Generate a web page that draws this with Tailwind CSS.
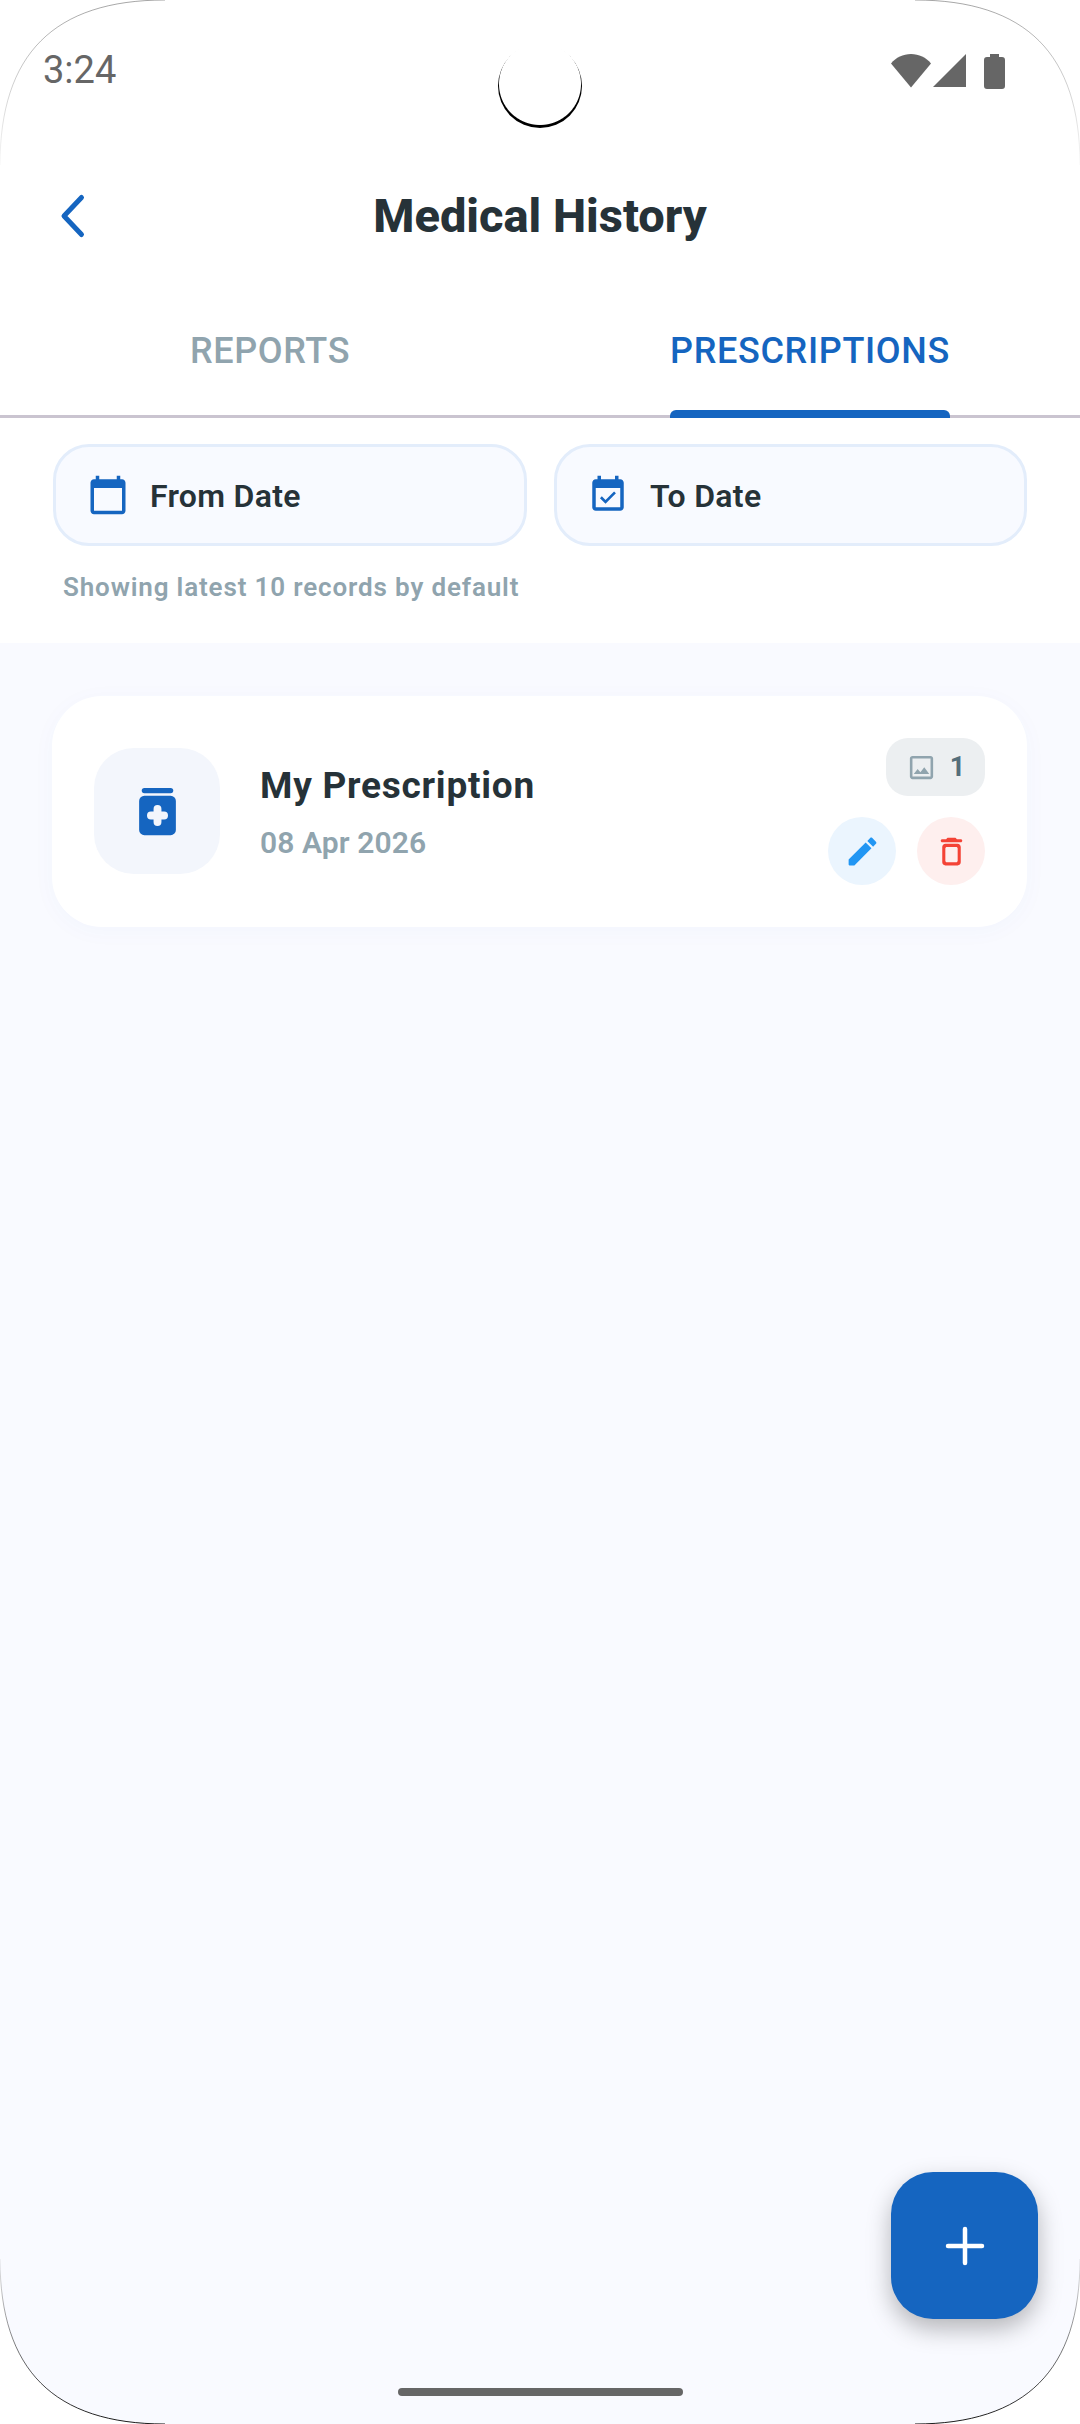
<!DOCTYPE html>
<html lang="en">
<head>
    <meta charset="UTF-8">
    <meta name="viewport" content="width=device-width, initial-scale=1.0">
    <title>Medical History</title>
    <script src="https://cdn.jsdelivr.net/npm/@tailwindcss/browser@4"></script>
</head>
<body class="bg-white font-['Roboto',sans-serif]">
    <div class="relative w-[1080px] h-[2424px] overflow-hidden bg-[#f9faff] flex flex-col">
        <!-- status bar -->
        <div class="h-[150px] bg-white flex justify-between items-start pl-[43px] pr-[75px] pt-[48px]">
            <span class="text-[38px] leading-[44px] text-[#666666]">3:24</span>
            <div class="flex items-start gap-[3px] pt-[6px]">
                <svg width="40" height="34" viewBox="0 0 40 34"><path d="M0 9.500C5 3.500 12 0 20 0s15 3.500 20 9.500L20 33.500z" fill="#666666"/></svg>
                <svg width="34" height="34" viewBox="0 0 34 34" class="ml-[-1px]"><path d="M33 0v33H0z" fill="#666666"/></svg>
                <svg width="21" height="35" viewBox="0 0 21 35" class="ml-[14px]"><path d="M6 3V0h9v3h3a3 3 0 0 1 3 3v26a3 3 0 0 1-3 3H3a3 3 0 0 1-3-3V6a3 3 0 0 1 3-3z" fill="#666666"/></svg>
            </div>
        </div>
        <!-- camera cutout -->
        <div class="absolute left-[498px] top-[44px] w-[84px] h-[84px] rounded-full bg-[radial-gradient(circle_at_50%_47.6%,#ffffff_40.5px,#000000_41.5px)]"></div>

        <!-- header -->
        <div class="relative h-[132px] bg-white flex items-center justify-center">
            <svg class="absolute left-[58px] top-[42px]" width="30" height="48" viewBox="0 0 30 48" fill="none"><path d="M23.500 5.500L6 24l17.500 18.500" stroke="#1565c0" stroke-width="5" stroke-linecap="round" stroke-linejoin="round"/></svg>
            <h1 class="text-[47px] font-extrabold text-[#263238]">Medical History</h1>
        </div>

        <!-- tabs -->
        <div class="relative h-[136px] bg-white flex border-b-[3px] border-[#cac4d0]">
            <div class="w-1/2 flex justify-center pt-[48px] text-[36px] leading-[42px] font-medium tracking-[0.65px] text-[#90a4ae]">REPORTS</div>
            <div class="w-1/2 flex justify-center pt-[48px]">
                <div class="relative h-[132px] text-[36px] leading-[42px] font-medium tracking-[0.65px] text-[#1565c0]">
                    PRESCRIPTIONS
                    <div class="absolute left-0 right-0 top-[80px] h-[8px] bg-[#1565c0] rounded-t-[6px]"></div>
                </div>
            </div>
        </div>

        <!-- date filters -->
        <div class="h-[225px] bg-white px-[53px] pt-[26px]">
            <div class="flex gap-[27px]">
                <div class="w-[474px] h-[102px] rounded-[36px] border-[3px] border-[#e3edfb] bg-[#f8faff] flex items-center pl-[31px] gap-[21px]">
                    <svg width="42" height="42" viewBox="0 0 24 24" fill="#1565c0"><path d="M20 3h-1V1h-2v2H7V1H5v2H4c-1.100 0-2 .9-2 2v16c0 1.100.9 2 2 2h16c1.100 0 2-.9 2-2V5c0-1.100-.9-2-2-2zm0 18H4V8h16v13z"/></svg>
                    <span class="pt-[2px] text-[32px] font-semibold tracking-[0.3px] text-[#263238]">From Date</span>
                </div>
                <div class="w-[473px] h-[102px] rounded-[36px] border-[3px] border-[#e3edfb] bg-[#f8faff] flex items-center pl-[30px] gap-[21px]">
                    <svg width="42" height="42" viewBox="0 0 24 24" fill="#1565c0"><path d="M16.530 11.060L15.470 10l-4.880 4.880-2.120-2.120-1.060 1.060L10.590 17l5.940-5.940zM19 3h-1V1h-2v2H8V1H6v2H5c-1.110 0-1.990.9-1.990 2L3 19c0 1.100.89 2 2 2h14c1.100 0 2-.9 2-2V5c0-1.100-.9-2-2-2zm0 16H5V8h14v11z"/></svg>
                    <span class="pt-[2px] text-[32px] font-semibold tracking-[0.3px] text-[#263238]">To Date</span>
                </div>
            </div>
            <p class="mt-[26px] ml-[10px] text-[26px] leading-[30px] font-semibold text-[#90a4ae] tracking-[0.85px]">Showing latest 10 records by default</p>
        </div>

        <!-- list -->
        <div class="flex-1 px-[52px] pt-[53px]">
            <div class="relative w-[975px] h-[231px] rounded-[50px] bg-white shadow-[0_4px_24px_rgba(21,101,192,0.03)] flex items-center pl-[42px]">
                <div class="mb-[1px] w-[126px] h-[126px] rounded-[40px] bg-[#f3f6fc] flex items-center justify-center">
                    <svg width="63" height="63" viewBox="0 0 24 24" fill="#1565c0">
                        <rect x="6" y="3" width="12" height="2" rx="1"/>
                        <path d="M7 6h10a2 2 0 0 1 2 2v11a2 2 0 0 1-2 2H7a2 2 0 0 1-2-2V8a2 2 0 0 1 2-2z"/>
                        <path d="M9.500 13.500h5M12 11v5" stroke="#f3f6fc" stroke-width="3" stroke-linecap="round"/>
                    </svg>
                </div>
                <div class="ml-[40px] mt-[2px] flex flex-col">
                    <span class="text-[37px] leading-[44px] font-bold text-[#263238] tracking-[0.75px]">My Prescription</span>
                    <span class="mt-[17px] text-[30px] leading-[36px] font-semibold text-[#90a4ae] tracking-[0.1px]">08 Apr 2026</span>
                </div>
                <div class="ml-auto mr-[42px] flex flex-col items-end">
                    <div class="w-[99px] h-[58px] rounded-[22px] bg-[#eceff1] flex items-center justify-center gap-[13px]">
                        <svg width="31" height="31" viewBox="0 0 24 24" fill="#90a4ae"><path d="M19 5v14H5V5h14m0-2H5c-1.100 0-2 .9-2 2v14c0 1.100.9 2 2 2h14c1.100 0 2-.9 2-2V5c0-1.100-.9-2-2-2zm-4.860 8.860l-3 3.870L9 13.140 6 17h12l-3.860-5.140z"/></svg>
                        <span class="text-[27px] font-bold text-[#546e7a]">1</span>
                    </div>
                    <div class="mt-[21px] flex gap-[21px]">
                        <div class="w-[68px] h-[68px] rounded-full bg-[#ebf5fe] flex items-center justify-center">
                            <svg width="37" height="37" viewBox="0 0 24 24" fill="#2196f3"><path d="M3 17.460v3.040c0 .28.22.5.5.5h3.040c.13 0 .26-.05.35-.15L17.810 9.940l-3.750-3.750L3.150 17.100c-.1.1-.15.22-.15.36zM20.710 7.040c.39-.39.39-1.020 0-1.410l-2.340-2.340c-.39-.39-1.020-.39-1.410 0l-1.830 1.830 3.750 3.750 1.830-1.830z"/></svg>
                        </div>
                        <div class="w-[68px] h-[68px] rounded-full bg-[#feefee] flex items-center justify-center">
                            <svg width="37" height="37" viewBox="0 0 24 24" fill="#f44336"><path d="M6 19c0 1.100.9 2 2 2h8c1.100 0 2-.9 2-2V9c0-1.100-.9-2-2-2H8c-1.100 0-2 .9-2 2v10zM9 9h6c.55 0 1 .45 1 1v8c0 .55-.45 1-1 1H9c-.55 0-1-.45-1-1v-8c0-.55.45-1 1-1zm6.500-5l-.71-.71c-.18-.18-.44-.29-.7-.29H9.910c-.26 0-.52.11-.7.29L8.500 4H6c-.55 0-1 .45-1 1s.45 1 1 1h12c.55 0 1-.45 1-1s-.45-1-1-1h-2.500z"/></svg>
                        </div>
                    </div>
                </div>
            </div>
        </div>

        <!-- floating add button -->
        <div class="absolute left-[891px] top-[2172px] w-[147px] h-[147px] rounded-[42px] bg-[#1565c0] shadow-[0_10px_24px_rgba(0,0,0,0.28)] flex items-center justify-center">
            <svg width="40" height="40" viewBox="0 0 40 40" fill="none"><path d="M20 3v34M3 20h34" stroke="#ffffff" stroke-width="4.500" stroke-linecap="round"/></svg>
        </div>

        <!-- home indicator -->
        <div class="absolute left-[398px] top-[2388px] w-[285px] h-[8px] rounded-full bg-[#666666]"></div>

        <!-- screen corners -->
        <svg class="absolute inset-0 pointer-events-none" width="1080" height="2424" viewBox="0 0 1080 2424" fill="#ffffff">
            <defs>
                <linearGradient id="edgeTop" gradientUnits="userSpaceOnUse" x1="0" y1="0" x2="0" y2="165">
                    <stop offset="0" stop-color="#000000" stop-opacity="0.35"/>
                    <stop offset="1" stop-color="#000000" stop-opacity="0.03"/>
                </linearGradient>
                <linearGradient id="edgeBottom" gradientUnits="userSpaceOnUse" x1="0" y1="2259" x2="0" y2="2424">
                    <stop offset="0" stop-color="#000000" stop-opacity="0.08"/>
                    <stop offset="1" stop-color="#000000" stop-opacity="0.9"/>
                </linearGradient>
            </defs>
            <path d="M0 165C0 54 54 0 165 0H0z"/>
            <path d="M1080 165C1080 54 1026 0 915 0H1080z"/>
            <path d="M0 2259C0 2370 54 2424 165 2424H0z"/>
            <path d="M1080 2259C1080 2370 1026 2424 915 2424H1080z"/>
            <path d="M0 165C0 54 54 0 165 0M1080 165C1080 54 1026 0 915 0" fill="none" stroke="url(#edgeTop)" stroke-width="1"/>
            <path d="M0 2259C0 2370 54 2424 165 2424M1080 2259C1080 2370 1026 2424 915 2424" fill="none" stroke="url(#edgeBottom)" stroke-width="1"/>
        </svg>
    </div>
</body>
</html>
